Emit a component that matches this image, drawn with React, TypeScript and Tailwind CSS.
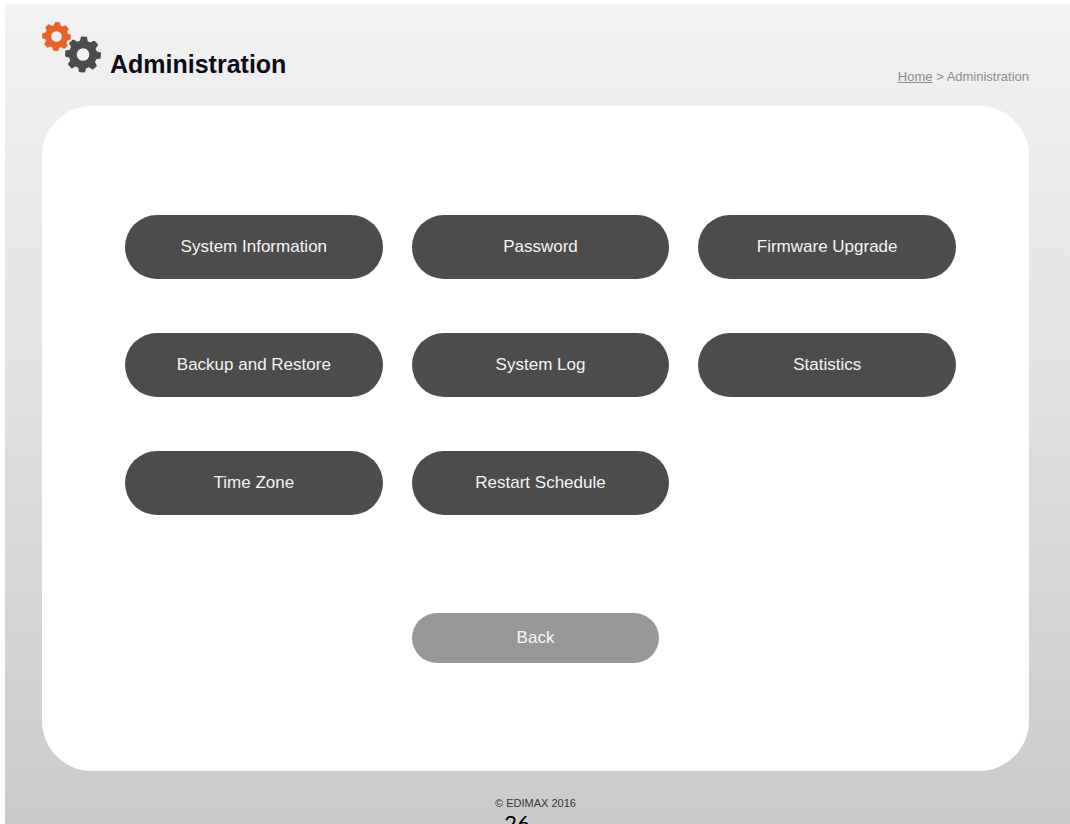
const items: string[] = [
  "System Information",
  "Password",
  "Firmware Upgrade",
  "Backup and Restore",
  "System Log",
  "Statistics",
  "Time Zone",
  "Restart Schedule",
];

function gearPath(cx: number, cy: number, outer: number, root: number, hole: number) {
  const teeth = 8;
  const points: string[] = [];
  for (let i = 0; i < teeth; i++) {
    const mid = (i * 2 * Math.PI) / teeth - Math.PI / 2 + 0.06;
    const corners: [number, number][] = [
      [root, -0.23],
      [outer, -0.13],
      [outer, 0.13],
      [root, 0.23],
    ];
    for (const [r, offset] of corners) {
      points.push(
        `${(cx + r * Math.cos(mid + offset)).toFixed(2)} ${(cy + r * Math.sin(mid + offset)).toFixed(2)}`,
      );
    }
  }
  return `M${points.join("L")}Z M${cx - hole} ${cy}a${hole} ${hole} 0 1 0 ${hole * 2} 0a${hole} ${hole} 0 1 0 ${-hole * 2} 0Z`;
}

function GearsIcon() {
  return (
    <svg width="60" height="54" viewBox="0 0 60 54" aria-hidden="true" strokeLinejoin="round" strokeWidth="2">
      <path d={gearPath(14.5, 15.5, 13.5, 10.8, 6.3)} fill="#e8622a" stroke="#e8622a" fillRule="evenodd" />
      <path d={gearPath(41, 33.5, 17, 13.2, 7.3)} fill="#4b4d4d" stroke="#4b4d4d" fillRule="evenodd" />
    </svg>
  );
}

export default function App() {
  return (
    <div className="h-screen overflow-hidden bg-white pt-1 pl-[5px] font-['Liberation_Sans',Arial,sans-serif]">
      <div className="flex min-h-full flex-col bg-linear-to-b from-[#f2f2f2] via-[#e0e0e0] to-[#cacaca] pr-[41px] pl-[37px]">
        <header className="flex h-[102px] items-start justify-between">
          <div className="flex items-start gap-2 pt-[17px]">
            <GearsIcon />
            <h1 className="pt-[27px] text-[25px] leading-8 font-bold text-[#0c0c18]">Administration</h1>
          </div>
          <nav aria-label="Breadcrumb" className="pt-[65px] text-[13px] leading-4 text-[#8c8c8c]">
            <a href="#home" className="underline">Home</a>
            {" > "}
            <span>Administration</span>
          </nav>
        </header>
        <main className="rounded-[50px] bg-white pt-[109px] pr-[73px] pb-[108px] pl-[83px]">
          <div className="grid grid-cols-3 gap-x-[29px] gap-y-[54px]">
            {items.map((label) => (
              <button key={label} type="button" className="h-16 rounded-full bg-[#4c4c4c] text-[17px] text-[#f4f4f4]">
                {label}
              </button>
            ))}
          </div>
          <div className="mt-[98px] grid grid-cols-3 gap-x-[29px]">
            <button type="button" className="col-start-2 mr-[10px] h-[50px] rounded-full bg-[#979797] text-[17px] text-[#f8f8f8]">
              Back
            </button>
          </div>
        </main>
        <footer className="pt-6 text-center text-[11px] leading-4 text-[#333333]">© EDIMAX 2016</footer>
        <p className="h-3 pr-[37px] text-center font-['Lato','Open_Sans',sans-serif] text-[22px] leading-6 text-black">26</p>
      </div>
    </div>
  );
}
